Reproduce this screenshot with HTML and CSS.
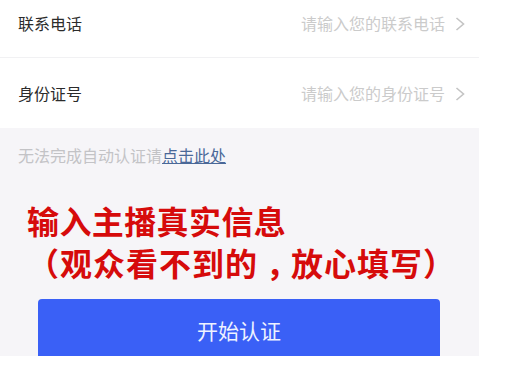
FILE: index.html
```html
<!DOCTYPE html>
<html lang="zh-CN">
<head>
<meta charset="utf-8">
<title>认证</title>
<link rel="stylesheet" href="styles.css">
</head>
<body>
<div class="page">
  <div class="form">
    <div class="row row-first">
      <span class="label">联系电话</span>
      <span class="value">请输入您的联系电话
        <svg class="chev" width="10" height="14" viewBox="0 0 10 14"><polyline points="1.5,1 8.5,7 1.5,13" fill="none" stroke="#c4c4c4" stroke-width="1.6"/></svg>
      </span>
    </div>
    <div class="row">
      <span class="label">身份证号</span>
      <span class="value">请输入您的身份证号
        <svg class="chev" width="10" height="14" viewBox="0 0 10 14"><polyline points="1.5,1 8.5,7 1.5,13" fill="none" stroke="#c4c4c4" stroke-width="1.6"/></svg>
      </span>
    </div>
  </div>
  <div class="gray">
    <p class="hint">无法完成自动认证请<a class="link">点击此处</a></p>
    <div class="notice">
      <div class="line1">输入主播真实信息</div>
      <div class="line2">（观众看不到的<span class="comma">，</span>放心填写）</div>
    </div>
    <button class="btn">开始认证</button>
  </div>
</div>
</body>
</html>
```
FILE: styles.css
```css
html, body {
  margin: 0;
  padding: 0;
  background: #ffffff;
}
body {
  font-family: "Noto Sans CJK SC", "Noto Sans", sans-serif;
}
.page {
  width: 479px;
  height: 356px;
  overflow: hidden;
  background: #f6f5f8;
}
.form {
  background: #ffffff;
}
.row {
  height: 70px;
  display: flex;
  align-items: center;
  justify-content: space-between;
  padding: 0 14px 0 18px;
  box-sizing: border-box;
  border-bottom: 1px solid #f1f1f3;
}
.row-first {
  margin-top: -12px;
}
.row:last-child {
  border-bottom: none;
}
.label {
  font-size: 16px;
  color: #2b2b2b;
}
.value {
  display: flex;
  align-items: center;
  gap: 10px;
  font-size: 16px;
  color: #cbcbcb;
}
.chev {
  display: block;
  margin-top: 2px;
}
.gray {
  padding: 17px 18px 0 18px;
}
.hint {
  margin: 0;
  font-size: 16px;
  line-height: 20px;
  color: #c3c3c6;
}
.link {
  color: #4a6898;
  text-decoration: underline;
}
.notice {
  margin: 34px 0 0 9px;
  font-size: 32px;
  line-height: 42px;
  font-weight: 700;
  color: #d60b0b;
  white-space: nowrap;
}
.line1 {
  letter-spacing: 0.4px;
}
.line2 {
  letter-spacing: 1px;
}
.comma {
  font-feature-settings: "halt";
  padding: 0 8px;
}
.btn {
  display: block;
  margin: 16px 0 0 20px;
  width: 402px;
  height: 62px;
  border: none;
  border-radius: 4px;
  background: #3a60f6;
  color: #eef2ff;
  font-family: "Noto Sans CJK SC", sans-serif;
  font-size: 21px;
  padding: 0;
}
```
